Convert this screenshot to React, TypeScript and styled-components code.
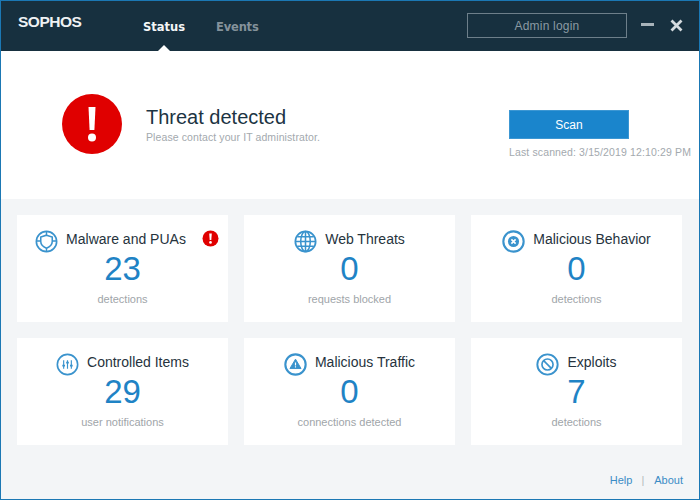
import React from "react";
import styled, { createGlobalStyle } from "styled-components";

const Global = createGlobalStyle`
  html, body { margin: 0; padding: 0; background: #f3f5f7; }
  * { box-sizing: border-box; }
`;

const Window = styled.div`
  width: 700px;
  height: 500px;
  display: flex;
  flex-direction: column;
  border: 1px solid #1b78b4;
  background: #f3f5f7;
  font-family: "Liberation Sans", Arial, sans-serif;
  overflow: hidden;
`;

const Header = styled.header`
  height: 50px;
  flex: none;
  display: flex;
  align-items: flex-start;
  background: #17303f;
  padding-left: 17px;
`;

const Logo = styled.div`
  width: 125px;
  margin-top: 12px;
  color: #eef1f3;
  font-size: 15.5px;
  line-height: 18px;
  font-weight: 700;
  letter-spacing: -0.5px;
`;

const Nav = styled.nav`
  display: flex;
  gap: 31px;
  height: 50px;
`;

const Tab = styled.div<{ $active?: boolean }>`
  position: relative;
  height: 50px;
  padding-top: 18px;
  font-family: "DejaVu Sans", Verdana, sans-serif;
  font-size: 11.5px;
  line-height: 16px;
  font-weight: 700;
  color: ${(p) => (p.$active ? "#f4f6f7" : "#84929b")};
  ${(p) =>
    p.$active
      ? `&::after {
    content: "";
    position: absolute;
    left: 50%;
    bottom: 0;
    margin-left: -6px;
    border-left: 6px solid transparent;
    border-right: 6px solid transparent;
    border-bottom: 6px solid #fff;
  }`
      : "letter-spacing: -0.2px;"}
`;

const HeaderRight = styled.div`
  margin-left: auto;
  display: flex;
  align-items: flex-start;
`;

const LoginButton = styled.button`
  width: 160px;
  height: 25px;
  margin-top: 12px;
  padding: 0;
  background: transparent;
  border: 1px solid #6d7f8a;
  color: #8b9aa3;
  font-family: "Liberation Sans", Arial, sans-serif;
  font-size: 12px;
  letter-spacing: 0.2px;
`;

const WindowIcon = styled.svg`
  display: block;
  flex: none;
`;

const MinIcon = styled(WindowIcon)`
  margin: 18px 0 0 14px;
`;

const CloseIcon = styled(WindowIcon)`
  margin: 18px 16px 0 16px;
`;

const Hero = styled.section`
  height: 148px;
  flex: none;
  display: flex;
  background: #fff;
`;

const AlertBlock = styled.div`
  display: flex;
  align-items: flex-start;
  padding: 43px 0 0 61px;
  flex: 1;
`;

const AlertMark = styled.svg`
  display: block;
  flex: none;
`;

const AlertCopy = styled.div`
  margin: 11px 0 0 24px;
`;

const AlertTitle = styled.h1`
  margin: 0;
  font-size: 20px;
  line-height: 24px;
  font-weight: 400;
  color: #1c3443;
`;

const AlertSub = styled.p`
  margin: 2px 0 0;
  font-size: 10.5px;
  line-height: 13px;
  color: #a3a9ae;
  letter-spacing: 0.1px;
`;

const ScanBlock = styled.div`
  width: 190px;
  padding-top: 59px;
`;

const ScanButton = styled.button`
  display: block;
  width: 120px;
  height: 29px;
  padding: 0;
  border: 1px solid #3c97d3;
  background: #1a85cc;
  color: #fff;
  font-family: "Liberation Sans", Arial, sans-serif;
  font-size: 12px;
`;

const LastScanned = styled.div`
  margin-top: 7px;
  font-size: 10.5px;
  line-height: 13px;
  color: #a3a9ae;
  letter-spacing: 0.13px;
  white-space: nowrap;
`;

const Grid = styled.main`
  display: grid;
  grid-template-columns: repeat(3, 211px);
  grid-auto-rows: 107px;
  gap: 16px;
  padding: 16px 16px 0;
`;

const Card = styled.article`
  position: relative;
  background: #fff;
  display: flex;
  flex-direction: column;
  align-items: center;
  padding-top: 12px;
`;

const CardHead = styled.div<{ $alert?: boolean }>`
  display: flex;
  align-items: center;
  gap: 8px;
  height: 24px;
  color: #26333d;
  font-size: 14px;
  margin-right: ${(p) => (p.$alert ? "24px" : "0")};
`;

const IconBox = styled.svg`
  display: block;
  flex: none;
  margin-top: 4px;
`;

const Count = styled.div`
  margin-top: 0;
  font-size: 33px;
  line-height: 36px;
  color: #1f83c5;
`;

const CountLabel = styled.div`
  margin-top: 6px;
  font-size: 11px;
  line-height: 13px;
  color: #a0a5a9;
`;

const Badge = styled.svg`
  position: absolute;
  top: 15px;
  right: 9px;
`;

const Footer = styled.footer`
  margin-top: auto;
  height: 37px;
  display: flex;
  justify-content: flex-end;
  align-items: flex-start;
  padding: 12px 16px 0 0;
  font-size: 11px;
  line-height: 13px;
  color: #b3b9bd;
`;

const FooterLink = styled.a`
  color: #3a8cc6;
`;

const FooterSep = styled.span`
  margin: 0 10px 0 9px;
`;

const blue = "#3a93cd";

const Ring: React.FC<{ children?: React.ReactNode; w?: number }> = ({ children, w = 2 }) => (
  <IconBox width="23" height="23" viewBox="0 0 24 24" fill="none">
    <circle cx="12" cy="12" r="10.6" stroke={blue} strokeWidth={w} />
    {children}
  </IconBox>
);

const ShieldIcon = () => (
  <Ring w={1.7}>
    <path d="M12 5.4 L18 7.4 V12 C18 15.5 15.4 17.6 12 19 C8.6 17.6 6 15.5 6 12 V7.4 Z" stroke={blue} strokeWidth="1.6" />
    <path d="M12 1.8 V5.4 M12 19 V22.2 M1.8 11.4 H6 M18 11.4 H22.2" stroke={blue} strokeWidth="1.5" />
  </Ring>
);

const GlobeIcon = () => (
  <Ring w={1.8}>
    <ellipse cx="12" cy="12" rx="5" ry="10.4" stroke={blue} strokeWidth="1.6" />
    <path d="M12 2 V22 M2 12 H22 M3.5 7 H20.5 M3.5 17 H20.5" stroke={blue} strokeWidth="1.6" />
  </Ring>
);

const CrossIcon = () => (
  <Ring w={2.2}>
    <circle cx="12" cy="12" r="5.8" fill={blue} />
    <path d="M9.8 9.8 L14.2 14.2 M14.2 9.8 L9.8 14.2" stroke="#fff" strokeWidth="1.7" />
  </Ring>
);

const SlidersIcon = () => (
  <Ring w={1.7}>
    <path d="M8 7.5 V16.5 M12 7.5 V16.5 M16 7.5 V16.5" stroke={blue} strokeWidth="1.2" />
    <path d="M6.6 13.2 H9.4 M10.6 10 H13.4 M14.6 13.2 H17.4" stroke={blue} strokeWidth="2" />
  </Ring>
);

const TriangleIcon = () => (
  <Ring w={2.2}>
    <path d="M12 6.4 L17.8 16.2 H6.2 Z" fill={blue} stroke={blue} strokeLinejoin="round" />
    <path d="M12 10 V13 M12 13.8 V15" stroke="#fff" strokeWidth="1.2" />
  </Ring>
);

const BanIcon = () => (
  <Ring w={2}>
    <circle cx="12" cy="12" r="5.8" stroke={blue} strokeWidth="1.7" />
    <path d="M8 8 L16 16" stroke={blue} strokeWidth="1.7" />
  </Ring>
);

const cards = [
  { title: "Malware and PUAs", count: "23", label: "detections", icon: <ShieldIcon />, alert: true },
  { title: "Web Threats", count: "0", label: "requests blocked", icon: <GlobeIcon /> },
  { title: "Malicious Behavior", count: "0", label: "detections", icon: <CrossIcon /> },
  { title: "Controlled Items", count: "29", label: "user notifications", icon: <SlidersIcon /> },
  { title: "Malicious Traffic", count: "0", label: "connections detected", icon: <TriangleIcon /> },
  { title: "Exploits", count: "7", label: "detections", icon: <BanIcon /> },
];

export default function App() {
  return (
    <>
      <Global />
      <Window>
        <Header>
          <Logo>SOPHOS</Logo>
          <Nav>
            <Tab $active>Status</Tab>
            <Tab>Events</Tab>
          </Nav>
          <HeaderRight>
            <LoginButton>Admin login</LoginButton>
            <MinIcon width="13" height="12" viewBox="0 0 13 12">
              <rect x="0" y="4" width="13" height="3" fill="#a8b3ba" />
            </MinIcon>
            <CloseIcon width="13" height="13" viewBox="0 0 13 13">
              <path d="M1.5 1.5 L11.5 11.5 M11.5 1.5 L1.5 11.5" stroke="#d5dbdf" strokeWidth="2.8" />
            </CloseIcon>
          </HeaderRight>
        </Header>
        <Hero>
          <AlertBlock>
            <AlertMark width="60" height="60" viewBox="0 0 60 60">
              <circle cx="30" cy="30" r="30" fill="#e00000" />
              <path d="M26.5 13 H33.5 L32.4 36 H27.6 Z" fill="#fff" />
              <circle cx="30" cy="43.5" r="4" fill="#fff" />
            </AlertMark>
            <AlertCopy>
              <AlertTitle>Threat detected</AlertTitle>
              <AlertSub>Please contact your IT administrator.</AlertSub>
            </AlertCopy>
          </AlertBlock>
          <ScanBlock>
            <ScanButton>Scan</ScanButton>
            <LastScanned>Last scanned: 3/15/2019 12:10:29 PM</LastScanned>
          </ScanBlock>
        </Hero>
        <Grid>
          {cards.map((c) => (
            <Card key={c.title}>
              <CardHead $alert={c.alert}>
                {c.icon}
                <span>{c.title}</span>
              </CardHead>
              <Count>{c.count}</Count>
              <CountLabel>{c.label}</CountLabel>
              {c.alert && (
                <Badge width="17" height="17" viewBox="0 0 17 17">
                  <circle cx="8.5" cy="8.5" r="8" fill="#e00000" />
                  <path d="M7.2 3.5 H9.8 L9.3 10 H7.7 Z" fill="#fff" />
                  <circle cx="8.5" cy="12.4" r="1.3" fill="#fff" />
                </Badge>
              )}
            </Card>
          ))}
        </Grid>
        <Footer>
          <FooterLink>Help</FooterLink>
          <FooterSep>|</FooterSep>
          <FooterLink>About</FooterLink>
        </Footer>
      </Window>
    </>
  );
}
